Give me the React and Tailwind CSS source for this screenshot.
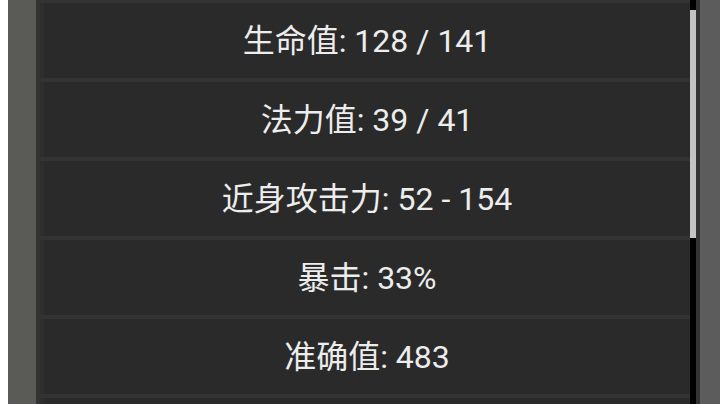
export default function App() {
  const rows = [
    "生命值: 128 / 141",
    "法力值: 39 / 41",
    "近身攻击力: 52 - 154",
    "暴击: 33%",
    "准确值: 483",
  ];
  return (
    <div
      className="flex h-[404px] w-[720px] overflow-hidden bg-white"
      style={{ fontFamily: 'Roboto, "Noto Sans CJK SC", sans-serif' }}
    >
      <div className="w-[8px] shrink-0 bg-white" />
      <div className="w-[28px] shrink-0 bg-[#5a5a56]" />
      <div className="flex flex-1 bg-[#333333] pl-[4px] pr-[4px]">
        <div className="flex flex-1 flex-col gap-[4px] overflow-hidden pt-[3px]">
          {rows.map((r) => (
            <div
              key={r}
              className="flex h-[75px] shrink-0 items-center justify-center border-l-[4px] border-[#2e2e2e] bg-[#2a2a2a] text-[32px] leading-none text-[#ededed]"
            >
              {r}
            </div>
          ))}
          <div className="h-[75px] shrink-0 border-l-[4px] border-[#2e2e2e] bg-[#2a2a2a]" />
        </div>
        <div className="flex w-[6px] shrink-0 flex-col bg-black">
          <div className="mt-[10px] h-[228px] bg-[#c4c4c4]" />
        </div>
      </div>
      <div className="w-[20px] shrink-0 bg-[#5c5c5c]" />
    </div>
  );
}
